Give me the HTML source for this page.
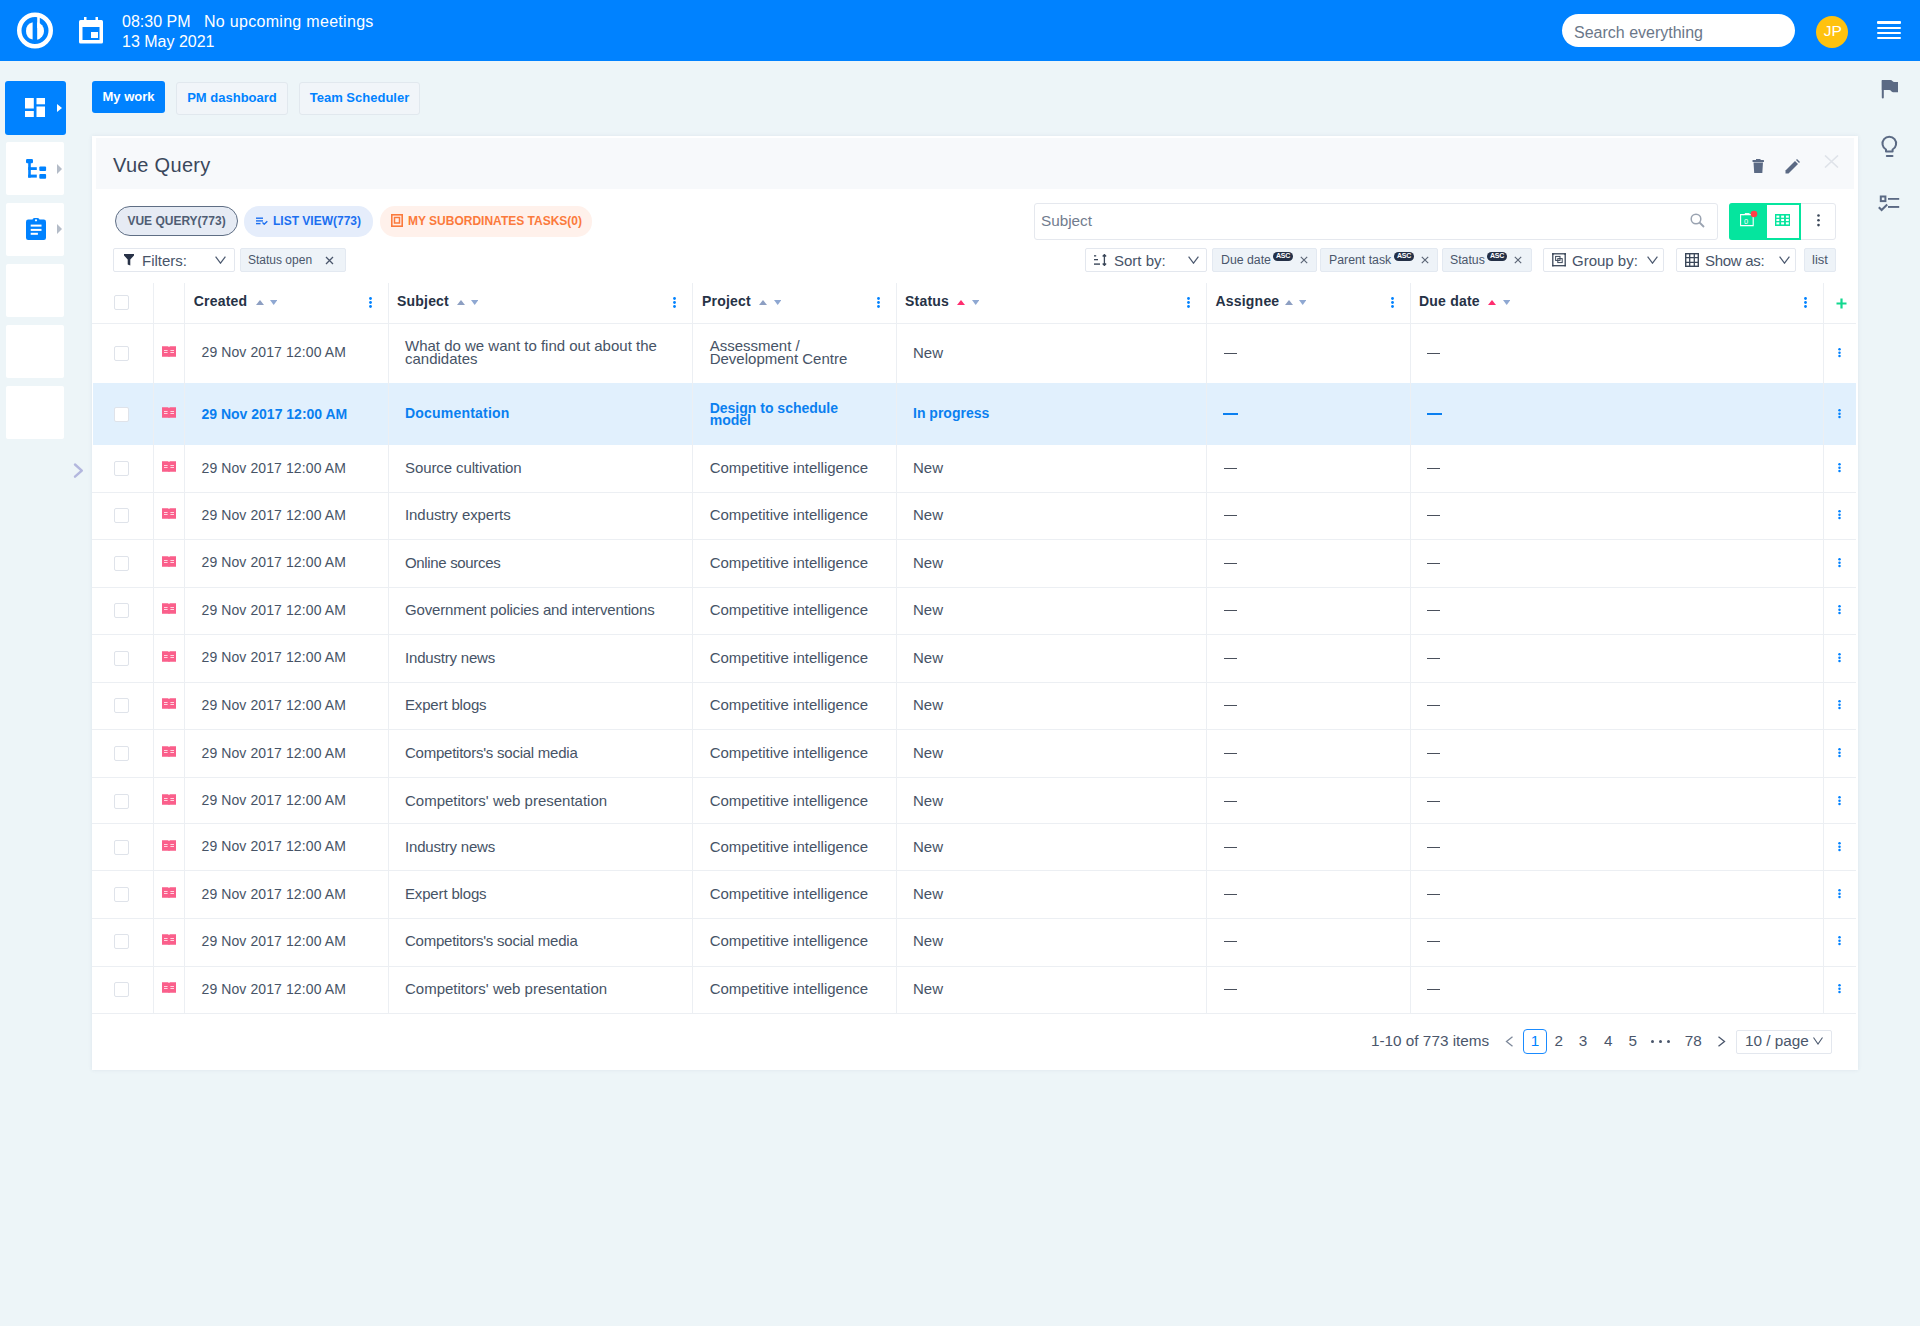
<!DOCTYPE html><html><head><meta charset="utf-8"><style>
*{box-sizing:border-box;margin:0;padding:0}
html,body{width:1920px;height:1326px;overflow:hidden}
body{background:#edf5f8;font-family:"Liberation Sans",sans-serif;color:#465366;position:relative}
.a{position:absolute}
.t{position:absolute;white-space:nowrap;line-height:1}
.hdr{left:0;top:0;width:1920px;height:61px;background:#0082ff}
.tile{position:absolute;left:6px;width:58px;height:53px;background:#fff;border-radius:2px}
.tab{position:absolute;top:82px;height:32.5px;border:1px solid #e1e8ee;border-radius:3px;background:#f1f5f9;color:#0082ff;font-weight:bold;font-size:13px;line-height:30px;text-align:center}
.card{left:92px;top:136px;width:1766px;height:934px;background:#fff;box-shadow:0 0 4px rgba(50,70,110,0.09)}
.chead{left:96px;top:138px;width:1758px;height:51px;background:#f7f9fb}
.pill{position:absolute;top:206px;height:30px;border-radius:15px;font-weight:bold;font-size:12px;line-height:30px;white-space:nowrap}
.box{position:absolute;height:24px;border:1px solid #e3e7ee;border-radius:2px;background:#fff}
.tag{position:absolute;height:24px;border:1px solid #e3e9f1;border-radius:2px;background:#eef3f8}
.vl{position:absolute;width:1px;background:#eceff3}
.hl{position:absolute;height:1px;background:#eceff3}
.cb{position:absolute;width:15px;height:15px;border:1px solid #dfe3ea;border-radius:2px;background:#fff}
.keb{position:absolute;width:3px}
.keb i{display:block;width:3px;height:3px;border-radius:50%;background:#0082ff;margin-bottom:1.2px}
.cell{position:absolute;font-size:15px;color:#465366;white-space:nowrap}
.hc{position:absolute;font-size:14px;font-weight:bold;color:#263246;white-space:nowrap;line-height:1;letter-spacing:0.2px}
.sa{position:absolute;width:0;height:0;border-left:4px solid transparent;border-right:4px solid transparent}
</style></head><body>
<div class="a hdr"></div>
<svg class="a" style="left:16px;top:12px" width="38" height="38" viewBox="0 0 38 38">
<circle cx="19" cy="18.5" r="15.75" fill="none" stroke="#fff" stroke-width="4.5"/>
<path d="M16.6 10.23 A9 9 0 0 0 16.6 27.57 Z" fill="#fff"/>
<path d="M21.2 10.17 A9 9 0 0 1 21.2 27.63 Z" fill="#fff"/>
<rect x="21.2" y="4" width="2.6" height="12" fill="#fff"/>
</svg>
<svg class="a" style="left:79px;top:17px" width="24" height="27" viewBox="0 0 24 27">
<rect x="0" y="3" width="24" height="23.5" rx="1.5" fill="#fff"/>
<rect x="3.5" y="10" width="17" height="13" fill="#0082ff"/>
<rect x="12" y="15" width="7" height="6" fill="#fff"/>
<rect x="5" y="0" width="2.5" height="5" fill="#fff"/>
<rect x="16.5" y="0" width="2.5" height="5" fill="#fff"/>
</svg>
<div class="t" style="left:122px;top:14px;font-size:16px;color:#fff">08:30 PM</div>
<div class="t" style="left:204px;top:14px;font-size:16px;color:#fff;letter-spacing:0.3px">No upcoming meetings</div>
<div class="t" style="left:122px;top:34px;font-size:16px;color:#fff">13 May 2021</div>
<div class="a" style="left:1562px;top:14px;width:233px;height:33px;border-radius:17px;background:#fff"></div>
<div class="t" style="left:1574px;top:25px;font-size:16px;color:#6b7789">Search everything</div>
<div class="a" style="left:1816px;top:16px;width:32px;height:32px;border-radius:50%;background:#ffc20e"></div>
<div class="t" style="left:1823.8px;top:23px;font-size:15.5px;color:#fff;letter-spacing:0px">JP</div>
<div class="a" style="left:1877px;top:21.2px;width:24px;height:2.6px;border-radius:1px;background:#fff"></div>
<div class="a" style="left:1877px;top:26.6px;width:24px;height:2.6px;border-radius:1px;background:#fff"></div>
<div class="a" style="left:1877px;top:31.7px;width:24px;height:2.6px;border-radius:1px;background:#fff"></div>
<div class="a" style="left:1877px;top:36.8px;width:24px;height:2.6px;border-radius:1px;background:#fff"></div>
<div class="a" style="left:5px;top:81px;width:61px;height:54px;background:#0082ff;border-radius:3px"></div>
<svg class="a" style="left:25.2px;top:98.2px" width="20" height="19" viewBox="0 0 20 19">
<rect x="0" y="0" width="8.8" height="10.5" fill="#fff"/><rect x="0" y="13" width="8.8" height="6" fill="#fff"/>
<rect x="11.5" y="0" width="8.5" height="6.3" fill="#fff"/><rect x="11.5" y="8.5" width="8.5" height="10.5" fill="#fff"/>
</svg>
<div class="sa" style="left:57px;top:104px;border:0;border-top:4.5px solid transparent;border-bottom:4.5px solid transparent;border-left:5px solid #fff"></div>
<div class="tile" style="top:142px"></div>
<div class="tile" style="top:203px"></div>
<div class="tile" style="top:264px"></div>
<div class="tile" style="top:325px"></div>
<div class="tile" style="top:386px"></div>
<svg class="a" style="left:26px;top:159px" width="21" height="20" viewBox="0 0 21 20">
<rect x="0" y="0" width="7" height="4.2" rx="1.2" fill="#0082ff"/>
<rect x="2.2" y="3" width="2.6" height="15.6" fill="#0082ff"/>
<rect x="2.2" y="8.2" width="8.6" height="2.8" fill="#0082ff"/>
<rect x="2.2" y="15.6" width="8.6" height="3" fill="#0082ff"/>
<rect x="13.3" y="7.4" width="6.8" height="4.7" rx="1" fill="#0082ff"/>
<rect x="13.3" y="15" width="6.8" height="4.7" rx="1" fill="#0082ff"/>
</svg>
<div class="sa" style="left:57px;top:164px;border:0;border-top:5px solid transparent;border-bottom:5px solid transparent;border-left:5px solid #b4bcc8"></div>
<svg class="a" style="left:26px;top:218px" width="20" height="22" viewBox="0 0 20 22">
<rect x="0" y="1.5" width="20" height="20.5" rx="2.2" fill="#0082ff"/>
<rect x="6.5" y="0" width="7" height="4" rx="2" fill="#0082ff"/>
<circle cx="10" cy="2.3" r="1.1" fill="#fff"/>
<rect x="4.7" y="6.6" width="10.8" height="2" fill="#fff"/>
<rect x="4.7" y="10.9" width="10.8" height="2" fill="#fff"/>
<rect x="4.7" y="14.8" width="7.2" height="2" fill="#fff"/>
</svg>
<div class="sa" style="left:57px;top:224px;border:0;border-top:5px solid transparent;border-bottom:5px solid transparent;border-left:5px solid #b4bcc8"></div>
<svg class="a" style="left:73px;top:462px" width="11" height="17" viewBox="0 0 11 17"><path d="M2 2.5 L8.8 8.6 L2 14.7" fill="none" stroke="#b3b7de" stroke-width="2.4" stroke-linecap="round" stroke-linejoin="round"/></svg>
<div class="a" style="left:92px;top:81px;width:73px;height:32px;background:#0082ff;border-radius:3px;color:#fff;font-weight:bold;font-size:13px;line-height:32px;text-align:center">My work</div>
<div class="tab" style="left:176px;width:112px">PM dashboard</div>
<div class="tab" style="left:299px;width:121px">Team Scheduler</div>
<svg class="a" style="left:1881px;top:80px" width="18" height="19" viewBox="0 0 18 19">
<rect x="0.8" y="0" width="2" height="18.5" rx="1" fill="#5b6a84"/>
<path d="M0.8 0 L9.3 0 Q10.8 0 11.4 1 Q12 2 13.5 2 L17 2 L17 12.2 L12 12.2 Q10.6 12.2 10.1 11.1 Q9.6 10 8.2 10 L0.8 10 Z" fill="#5b6a84"/>
</svg>
<svg class="a" style="left:1880px;top:135px" width="19" height="23" viewBox="0 0 19 23">
<path d="M6 16.4 L6 14.5 A6.8 6.8 0 1 1 12.6 14.5 L12.6 16.4 Z" fill="none" stroke="#5b6a84" stroke-width="2" stroke-linejoin="round"/>
<rect x="5.8" y="20" width="7.7" height="2" rx="1" fill="#5b6a84"/>
</svg>
<svg class="a" style="left:1878px;top:194px" width="22" height="18" viewBox="0 0 22 18">
<rect x="2.8" y="2.5" width="4.6" height="4.6" fill="none" stroke="#5b6a84" stroke-width="2"/>
<rect x="10" y="4" width="11.2" height="1.8" fill="#5b6a84"/>
<rect x="10" y="12" width="11.2" height="1.9" fill="#5b6a84"/>
<path d="M0.8 13.2 L3.6 16 L9.2 10.5" fill="none" stroke="#5b6a84" stroke-width="2"/>
</svg>
<div class="a card"></div>
<div class="a chead"></div>
<div class="t" style="left:113px;top:155px;font-size:20px;color:#3a475b;letter-spacing:0.3px">Vue Query</div>
<svg class="a" style="left:1752px;top:159px" width="13" height="14" viewBox="0 0 13 14">
<rect x="0.5" y="1" width="11.5" height="2" rx="0.5" fill="#5b6a84"/><rect x="4" y="0" width="4.5" height="1.5" fill="#5b6a84"/>
<path d="M1.5 3.5 L11 3.5 L10.3 14 L2.2 14 Z" fill="#5b6a84"/>
</svg>
<svg class="a" style="left:1785px;top:159px" width="15" height="15" viewBox="0 0 15 15">
<path d="M0.5 11.5 L10 2 L13 5 L3.5 14.5 L0.5 14.5 Z" fill="#5b6a84"/><path d="M11 1 L12 0 L15 3 L14 4 Z" fill="#5b6a84"/>
</svg>
<svg class="a" style="left:1824px;top:155px" width="15" height="13" viewBox="0 0 15 13"><path d="M1 0.5 L14 12.5 M14 0.5 L1 12.5" stroke="#dfe3e9" stroke-width="1.6"/></svg>
<div class="pill" style="left:115px;width:123px;border:1px solid #5f6e84;background:#e6ebf4;color:#4f5d73;text-align:center;line-height:28px">VUE QUERY(773)</div>
<div class="pill" style="left:244px;top:205.5px;height:31px;line-height:31px;width:129px;background:#e5edfb;color:#1c6ff0"><span style="position:absolute;left:29px">LIST VIEW(773)</span></div>
<svg class="a" style="left:256px;top:216.5px" width="12" height="8" viewBox="0 0 12 8"><rect x="0" y="0.5" width="7" height="1.4" fill="#1c6ff0"/><rect x="0" y="3.2" width="7" height="1.4" fill="#1c6ff0"/><rect x="0" y="5.9" width="4.5" height="1.4" fill="#1c6ff0"/><path d="M6.5 5.6 L8.2 7.2 L11.3 4.2" fill="none" stroke="#1c6ff0" stroke-width="1.4"/></svg>
<div class="pill" style="left:380px;top:205.5px;height:31px;line-height:31px;width:212px;background:#fff1eb;color:#fb7a3c"><span style="position:absolute;left:28px">MY SUBORDINATES TASKS(0)</span></div>
<svg class="a" style="left:391px;top:214px" width="12" height="13" viewBox="0 0 12 13"><rect x="0.8" y="0.8" width="10.4" height="11.4" fill="none" stroke="#fb7a3c" stroke-width="1.6"/><rect x="3.5" y="3.5" width="5" height="5.5" fill="none" stroke="#fb7a3c" stroke-width="1.5"/></svg>
<div class="box" style="left:113px;top:248px;width:122px"></div>
<svg class="a" style="left:124px;top:254px" width="10" height="11.5" viewBox="0 0 10 11.5"><path d="M0 0 L10 0 L10 1.4 L6.3 5.6 L6.3 11.5 L3.7 10.5 L3.7 5.6 L0 1.4 Z" fill="#283247"/></svg>
<div class="t" style="left:142px;top:253px;font-size:15px;color:#475469">Filters:</div>
<svg class="a" style="left:215px;top:255.5px" width="11" height="8" viewBox="0 0 11 8"><path d="M0.6 0.6 L5.5 7.2 L10.4 0.6" fill="none" stroke="#4d5a70" stroke-width="1.2"/></svg>
<div class="tag" style="left:240px;top:248px;width:106px"></div>
<div class="t" style="left:248px;top:254px;font-size:12px;color:#4a566b">Status open</div>
<svg class="a" style="left:325px;top:256px" width="9" height="9" viewBox="0 0 9 9"><path d="M1 1 L8 8 M8 1 L1 8" stroke="#4a566b" stroke-width="1.3"/></svg>
<div class="a" style="left:1034px;top:203px;width:684px;height:37px;border:1px solid #e5e8ee;border-radius:3px;background:#fff"></div>
<div class="t" style="left:1041px;top:213px;font-size:15.3px;color:#717c8e">Subject</div>
<svg class="a" style="left:1690px;top:213px" width="15" height="15" viewBox="0 0 15 15"><circle cx="6" cy="6" r="4.8" fill="none" stroke="#9aa3b1" stroke-width="1.5"/><path d="M9.5 9.5 L14 14" stroke="#9aa3b1" stroke-width="1.8"/></svg>
<div class="a" style="left:1729px;top:203px;width:107px;height:37px;border:1px solid #e5e8ee;border-radius:3px;background:#fff"></div>
<div class="a" style="left:1729px;top:203px;width:37px;height:37px;border-radius:3px 0 0 3px;background:#05e59e"></div>
<div class="a" style="left:1765px;top:203px;width:36px;height:37px;border:2px solid #05e59e;background:#fff"></div>
<svg class="a" style="left:1739px;top:210px" width="20" height="17" viewBox="0 0 20 17"><path d="M1.6 4.6 L1.6 15.6 L14.2 15.6 L14.2 4.6 Z" fill="none" stroke="#fff" stroke-width="1.1"/><path d="M4.5 5.2 L6 3.6 L10.5 3.6" fill="none" stroke="#fff" stroke-width="1"/><text x="5.1" y="13.6" font-size="7.5" font-family="Liberation Sans" fill="#fff">0</text><circle cx="15" cy="4" r="3.3" fill="#ff4048"/></svg>
<svg class="a" style="left:1775px;top:214px" width="15" height="12" viewBox="0 0 15 12"><rect x="0" y="0" width="15" height="12" fill="#05e59e"/><rect x="1.40" y="1.60" width="2.9" height="2.1" fill="#fff"/><rect x="1.40" y="4.95" width="2.9" height="2.1" fill="#fff"/><rect x="1.40" y="8.30" width="2.9" height="2.1" fill="#fff"/><rect x="6.15" y="1.60" width="2.9" height="2.1" fill="#fff"/><rect x="6.15" y="4.95" width="2.9" height="2.1" fill="#fff"/><rect x="6.15" y="8.30" width="2.9" height="2.1" fill="#fff"/><rect x="10.90" y="1.60" width="2.9" height="2.1" fill="#fff"/><rect x="10.90" y="4.95" width="2.9" height="2.1" fill="#fff"/><rect x="10.90" y="8.30" width="2.9" height="2.1" fill="#fff"/></svg>
<svg class="a" style="left:1816.5px;top:213.5px" width="3" height="13" viewBox="0 0 3 13"><circle cx="1.5" cy="1.5" r="1.3" fill="#3b4759"/><circle cx="1.5" cy="6.3" r="1.3" fill="#3b4759"/><circle cx="1.5" cy="11.1" r="1.3" fill="#3b4759"/></svg>
<div class="box" style="left:1085px;top:248px;width:122px"></div>
<svg class="a" style="left:1094px;top:254px" width="13" height="12" viewBox="0 0 13 12"><rect x="0" y="1.2" width="2.2" height="1.3" fill="#3b4759"/><rect x="0" y="5" width="4" height="1.3" fill="#3b4759"/><rect x="0" y="9.4" width="6" height="1.4" fill="#3b4759"/><path d="M10.4 0.8 V11.2 M8.7 2.5 L10.4 0.6 L12.1 2.5 M8.7 9.5 L10.4 11.4 L12.1 9.5" fill="none" stroke="#3b4759" stroke-width="1.3"/></svg>
<div class="t" style="left:1114px;top:253px;font-size:15px;color:#475469">Sort by:</div>
<svg class="a" style="left:1187.5px;top:255.5px" width="11" height="8" viewBox="0 0 11 8"><path d="M0.6 0.6 L5.5 7.2 L10.4 0.6" fill="none" stroke="#4d5a70" stroke-width="1.2"/></svg>
<div class="tag" style="left:1212px;top:248px;width:105px"></div>
<div class="t" style="left:1221px;top:254px;font-size:12.3px;color:#4a566b">Due date</div>
<div class="a" style="left:1273px;top:252px;width:20px;height:8.5px;border-radius:4.5px;background:#243047;color:#fff;font-size:7px;font-weight:bold;line-height:8.5px;text-align:center;letter-spacing:-0.3px">ASC</div>
<svg class="a" style="left:1300px;top:256px" width="8" height="8" viewBox="0 0 8 8"><path d="M0.8 0.8 L7.2 7.2 M7.2 0.8 L0.8 7.2" stroke="#5a6475" stroke-width="1.15"/></svg>
<div class="tag" style="left:1320px;top:248px;width:118px"></div>
<div class="t" style="left:1329px;top:254px;font-size:12.3px;color:#4a566b">Parent task</div>
<div class="a" style="left:1394px;top:252px;width:20px;height:8.5px;border-radius:4.5px;background:#243047;color:#fff;font-size:7px;font-weight:bold;line-height:8.5px;text-align:center;letter-spacing:-0.3px">ASC</div>
<svg class="a" style="left:1421px;top:256px" width="8" height="8" viewBox="0 0 8 8"><path d="M0.8 0.8 L7.2 7.2 M7.2 0.8 L0.8 7.2" stroke="#5a6475" stroke-width="1.15"/></svg>
<div class="tag" style="left:1442px;top:248px;width:90px"></div>
<div class="t" style="left:1450px;top:254px;font-size:12.3px;color:#4a566b">Status</div>
<div class="a" style="left:1487px;top:252px;width:20px;height:8.5px;border-radius:4.5px;background:#243047;color:#fff;font-size:7px;font-weight:bold;line-height:8.5px;text-align:center;letter-spacing:-0.3px">ASC</div>
<svg class="a" style="left:1514px;top:256px" width="8" height="8" viewBox="0 0 8 8"><path d="M0.8 0.8 L7.2 7.2 M7.2 0.8 L0.8 7.2" stroke="#5a6475" stroke-width="1.15"/></svg>
<div class="box" style="left:1543px;top:248px;width:121px"></div>
<svg class="a" style="left:1552px;top:253px" width="14" height="13.5" viewBox="0 0 14 13.5"><rect x="0.8" y="0.8" width="12.4" height="11.9" fill="none" stroke="#3b4759" stroke-width="1.3"/><circle cx="0.9" cy="0.9" r="0.9" fill="#3b4759"/><circle cx="13.1" cy="0.9" r="0.9" fill="#3b4759"/><circle cx="0.9" cy="12.6" r="0.9" fill="#3b4759"/><circle cx="13.1" cy="12.6" r="0.9" fill="#3b4759"/><rect x="3.6" y="3.4" width="4.4" height="4" fill="none" stroke="#3b4759" stroke-width="1"/><rect x="5.8" y="5.6" width="4.4" height="4" fill="none" stroke="#3b4759" stroke-width="1"/></svg>
<div class="t" style="left:1572px;top:253px;font-size:15px;color:#475469">Group by:</div>
<svg class="a" style="left:1646.5px;top:255.5px" width="11" height="8" viewBox="0 0 11 8"><path d="M0.6 0.6 L5.5 7.2 L10.4 0.6" fill="none" stroke="#4d5a70" stroke-width="1.2"/></svg>
<div class="box" style="left:1676px;top:248px;width:120px"></div>
<svg class="a" style="left:1685px;top:253px" width="14" height="14" viewBox="0 0 14 14"><rect x="0.7" y="0.7" width="12.6" height="12.6" fill="none" stroke="#3b4759" stroke-width="1.4"/><path d="M0 4.7 H14 M0 9.3 H14 M4.7 0 V14 M9.3 0 V14" stroke="#3b4759" stroke-width="1.3"/></svg>
<div class="t" style="left:1705px;top:253px;font-size:15px;color:#475469;letter-spacing:-0.3px">Show as:</div>
<svg class="a" style="left:1779px;top:255.5px" width="11" height="8" viewBox="0 0 11 8"><path d="M0.6 0.6 L5.5 7.2 L10.4 0.6" fill="none" stroke="#4d5a70" stroke-width="1.2"/></svg>
<div class="tag" style="left:1804px;top:248px;width:32px"></div>
<div class="t" style="left:1812px;top:253px;font-size:13px;color:#4a566b">list</div>
<div class="hl" style="left:92px;top:322.5px;width:1764px"></div>
<div class="a" style="left:93px;top:383.3px;width:1763px;height:61.69999999999999px;background:#e1f0fd"></div>
<div class="vl" style="left:153.0px;top:283px;height:730.1px"></div>
<div class="vl" style="left:183.8px;top:283px;height:730.1px"></div>
<div class="vl" style="left:388.3px;top:283px;height:730.1px"></div>
<div class="vl" style="left:692.3px;top:283px;height:730.1px"></div>
<div class="vl" style="left:895.8px;top:283px;height:730.1px"></div>
<div class="vl" style="left:1205.8px;top:283px;height:730.1px"></div>
<div class="vl" style="left:1409.7px;top:283px;height:730.1px"></div>
<div class="vl" style="left:1822.5px;top:283px;height:730.1px"></div>
<div class="hl" style="left:92px;top:491.85px;width:1764px"></div>
<div class="hl" style="left:92px;top:539.1px;width:1764px"></div>
<div class="hl" style="left:92px;top:586.7px;width:1764px"></div>
<div class="hl" style="left:92px;top:634.2px;width:1764px"></div>
<div class="hl" style="left:92px;top:681.8px;width:1764px"></div>
<div class="hl" style="left:92px;top:729.4px;width:1764px"></div>
<div class="hl" style="left:92px;top:777.0px;width:1764px"></div>
<div class="hl" style="left:92px;top:823.1px;width:1764px"></div>
<div class="hl" style="left:92px;top:870.4px;width:1764px"></div>
<div class="hl" style="left:92px;top:917.8px;width:1764px"></div>
<div class="hl" style="left:92px;top:965.5px;width:1764px"></div>
<div class="hl" style="left:92px;top:1012.6px;width:1764px"></div>
<div class="cb" style="left:114px;top:295px"></div>
<div class="hc" style="left:193.8px;top:294px">Created</div>
<div class="hc" style="left:397px;top:294px">Subject</div>
<div class="hc" style="left:702px;top:294px">Project</div>
<div class="hc" style="left:905px;top:294px">Status</div>
<div class="hc" style="left:1215.5px;top:294px">Assignee</div>
<div class="hc" style="left:1419px;top:294px">Due date</div>
<svg class="a" style="left:255.5px;top:300px" width="8" height="5" viewBox="0 0 8 5"><path d="M0 5 L4 0 L8 5 Z" fill="#8d9fc2"/></svg>
<svg class="a" style="left:269.5px;top:300px" width="7.4" height="5" viewBox="0 0 7.4 5"><path d="M0 0 L3.7 5 L7.4 0 Z" fill="#8fa8d2"/></svg>
<svg class="a" style="left:457px;top:300px" width="8" height="5" viewBox="0 0 8 5"><path d="M0 5 L4 0 L8 5 Z" fill="#8d9fc2"/></svg>
<svg class="a" style="left:470.8px;top:300px" width="7.4" height="5" viewBox="0 0 7.4 5"><path d="M0 0 L3.7 5 L7.4 0 Z" fill="#8fa8d2"/></svg>
<svg class="a" style="left:759.2px;top:300px" width="8" height="5" viewBox="0 0 8 5"><path d="M0 5 L4 0 L8 5 Z" fill="#8d9fc2"/></svg>
<svg class="a" style="left:773.5999999999999px;top:300px" width="7.4" height="5" viewBox="0 0 7.4 5"><path d="M0 0 L3.7 5 L7.4 0 Z" fill="#8fa8d2"/></svg>
<svg class="a" style="left:956.8px;top:300px" width="8" height="5" viewBox="0 0 8 5"><path d="M0 5 L4 0 L8 5 Z" fill="#ff2d6f"/></svg>
<svg class="a" style="left:971.8px;top:300px" width="7.4" height="5" viewBox="0 0 7.4 5"><path d="M0 0 L3.7 5 L7.4 0 Z" fill="#8fa8d2"/></svg>
<svg class="a" style="left:1284.7px;top:300px" width="8" height="5" viewBox="0 0 8 5"><path d="M0 5 L4 0 L8 5 Z" fill="#8d9fc2"/></svg>
<svg class="a" style="left:1299.1px;top:300px" width="7.4" height="5" viewBox="0 0 7.4 5"><path d="M0 0 L3.7 5 L7.4 0 Z" fill="#8fa8d2"/></svg>
<svg class="a" style="left:1488px;top:300px" width="8" height="5" viewBox="0 0 8 5"><path d="M0 5 L4 0 L8 5 Z" fill="#ff2d6f"/></svg>
<svg class="a" style="left:1502.8px;top:300px" width="7.4" height="5" viewBox="0 0 7.4 5"><path d="M0 0 L3.7 5 L7.4 0 Z" fill="#8fa8d2"/></svg>
<svg class="a" style="left:369.0px;top:297px" width="3" height="11" viewBox="0 0 3 11"><circle cx="1.5" cy="1.5" r="1.4" fill="#0082ff"/><circle cx="1.5" cy="5.5" r="1.4" fill="#0082ff"/><circle cx="1.5" cy="9.5" r="1.4" fill="#0082ff"/></svg>
<svg class="a" style="left:673.1px;top:297px" width="3" height="11" viewBox="0 0 3 11"><circle cx="1.5" cy="1.5" r="1.4" fill="#0082ff"/><circle cx="1.5" cy="5.5" r="1.4" fill="#0082ff"/><circle cx="1.5" cy="9.5" r="1.4" fill="#0082ff"/></svg>
<svg class="a" style="left:876.8px;top:297px" width="3" height="11" viewBox="0 0 3 11"><circle cx="1.5" cy="1.5" r="1.4" fill="#0082ff"/><circle cx="1.5" cy="5.5" r="1.4" fill="#0082ff"/><circle cx="1.5" cy="9.5" r="1.4" fill="#0082ff"/></svg>
<svg class="a" style="left:1187.0px;top:297px" width="3" height="11" viewBox="0 0 3 11"><circle cx="1.5" cy="1.5" r="1.4" fill="#0082ff"/><circle cx="1.5" cy="5.5" r="1.4" fill="#0082ff"/><circle cx="1.5" cy="9.5" r="1.4" fill="#0082ff"/></svg>
<svg class="a" style="left:1390.7px;top:297px" width="3" height="11" viewBox="0 0 3 11"><circle cx="1.5" cy="1.5" r="1.4" fill="#0082ff"/><circle cx="1.5" cy="5.5" r="1.4" fill="#0082ff"/><circle cx="1.5" cy="9.5" r="1.4" fill="#0082ff"/></svg>
<svg class="a" style="left:1803.7px;top:297px" width="3" height="11" viewBox="0 0 3 11"><circle cx="1.5" cy="1.5" r="1.4" fill="#0082ff"/><circle cx="1.5" cy="5.5" r="1.4" fill="#0082ff"/><circle cx="1.5" cy="9.5" r="1.4" fill="#0082ff"/></svg>
<svg class="a" style="left:1836px;top:297.5px" width="11" height="11" viewBox="0 0 11 11"><path d="M5.5 0.5 V10.5 M0.5 5.5 H10.5" stroke="#12d88f" stroke-width="2.2"/></svg>
<div class="cb" style="left:114px;top:345.65px"></div>
<svg class="a" style="left:162px;top:346px" width="14" height="11" viewBox="0 0 14 11"><path d="M0 0.3 L6 0.3 L7 1 L8 0.3 L14 0.3 L14 10.7 L8 10.7 L7 11 L6 10.7 L0 10.7 Z" fill="#fa5f8b"/><path d="M2 4.5 H5.6 M2 6.5 H5.6 M8.4 4.5 H12 M8.4 6.5 H12" stroke="#ffd6e2" stroke-width="1"/></svg>
<div class="t" style="left:201.5px;top:345.24999999999994px;font-size:14px;font-weight:normal;color:#465366;letter-spacing:0.1px">29 Nov 2017 12:00 AM</div>
<div class="t" style="left:405px;top:340.04999999999995px;font-size:15px;font-weight:normal;color:#465366;line-height:12.6px;white-space:normal">What do we want to find out about the<br>candidates</div>
<div class="t" style="left:709.7px;top:340.04999999999995px;font-size:15px;font-weight:normal;color:#465366;line-height:12.6px">Assessment /<br>Development Centre</div>
<div class="t" style="left:913px;top:344.74999999999994px;font-size:15px;font-weight:normal;color:#465366">New</div>
<div class="a" style="left:1224px;top:353px;width:12.5px;height:1px;background:#4a505c"></div>
<div class="a" style="left:1427px;top:353px;width:12.5px;height:1px;background:#4a505c"></div>
<svg class="a" style="left:1837.8px;top:347.65px" width="3" height="10" viewBox="0 0 3 10"><circle cx="1.5" cy="1.3" r="1.25" fill="#0082ff"/><circle cx="1.5" cy="4.7" r="1.25" fill="#0082ff"/><circle cx="1.5" cy="8.1" r="1.25" fill="#0082ff"/></svg>
<div class="cb" style="left:114px;top:406.65px"></div>
<svg class="a" style="left:162px;top:407px" width="14" height="11" viewBox="0 0 14 11"><path d="M0 0.3 L6 0.3 L7 1 L8 0.3 L14 0.3 L14 10.7 L8 10.7 L7 11 L6 10.7 L0 10.7 Z" fill="#fa5f8b"/><path d="M2 4.5 H5.6 M2 6.5 H5.6 M8.4 4.5 H12 M8.4 6.5 H12" stroke="#ffd6e2" stroke-width="1"/></svg>
<div class="t" style="left:201.5px;top:406.95px;font-size:14px;font-weight:bold;color:#0a7ff0;letter-spacing:0px">29 Nov 2017 12:00 AM</div>
<div class="t" style="left:405px;top:406.45px;font-size:14px;font-weight:bold;color:#0a7ff0;letter-spacing:0.2px">Documentation</div>
<div class="t" style="left:709.7px;top:401.75px;font-size:14px;font-weight:bold;color:#0a7ff0;line-height:12.6px">Design to schedule<br>model</div>
<div class="t" style="left:913px;top:406.45px;font-size:14px;font-weight:bold;color:#0a7ff0">In progress</div>
<div class="a" style="left:1223px;top:413.15px;width:15px;height:2px;background:#0a7ff0"></div>
<div class="a" style="left:1427px;top:413.15px;width:15px;height:2px;background:#0a7ff0"></div>
<svg class="a" style="left:1837.8px;top:408.65px" width="3" height="10" viewBox="0 0 3 10"><circle cx="1.5" cy="1.3" r="1.25" fill="#0082ff"/><circle cx="1.5" cy="4.7" r="1.25" fill="#0082ff"/><circle cx="1.5" cy="8.1" r="1.25" fill="#0082ff"/></svg>
<div class="cb" style="left:114px;top:461.0px"></div>
<svg class="a" style="left:162px;top:461px" width="14" height="11" viewBox="0 0 14 11"><path d="M0 0.3 L6 0.3 L7 1 L8 0.3 L14 0.3 L14 10.7 L8 10.7 L7 11 L6 10.7 L0 10.7 Z" fill="#fa5f8b"/><path d="M2 4.5 H5.6 M2 6.5 H5.6 M8.4 4.5 H12 M8.4 6.5 H12" stroke="#ffd6e2" stroke-width="1"/></svg>
<div class="t" style="left:201.5px;top:460.59999999999997px;font-size:14px;font-weight:normal;color:#465366;letter-spacing:0.1px">29 Nov 2017 12:00 AM</div>
<div class="t" style="left:405px;top:460.09999999999997px;font-size:15px;font-weight:normal;color:#465366;letter-spacing:-0.1px">Source cultivation</div>
<div class="t" style="left:709.7px;top:460.09999999999997px;font-size:15px;font-weight:normal;color:#465366">Competitive intelligence</div>
<div class="t" style="left:913px;top:460.09999999999997px;font-size:15px;font-weight:normal;color:#465366">New</div>
<div class="a" style="left:1224px;top:468px;width:12.5px;height:1px;background:#4a505c"></div>
<div class="a" style="left:1427px;top:468px;width:12.5px;height:1px;background:#4a505c"></div>
<svg class="a" style="left:1837.8px;top:463.0px" width="3" height="10" viewBox="0 0 3 10"><circle cx="1.5" cy="1.3" r="1.25" fill="#0082ff"/><circle cx="1.5" cy="4.7" r="1.25" fill="#0082ff"/><circle cx="1.5" cy="8.1" r="1.25" fill="#0082ff"/></svg>
<div class="cb" style="left:114px;top:508.35px"></div>
<svg class="a" style="left:162px;top:508px" width="14" height="11" viewBox="0 0 14 11"><path d="M0 0.3 L6 0.3 L7 1 L8 0.3 L14 0.3 L14 10.7 L8 10.7 L7 11 L6 10.7 L0 10.7 Z" fill="#fa5f8b"/><path d="M2 4.5 H5.6 M2 6.5 H5.6 M8.4 4.5 H12 M8.4 6.5 H12" stroke="#ffd6e2" stroke-width="1"/></svg>
<div class="t" style="left:201.5px;top:507.95px;font-size:14px;font-weight:normal;color:#465366;letter-spacing:0.1px">29 Nov 2017 12:00 AM</div>
<div class="t" style="left:405px;top:507.45px;font-size:15px;font-weight:normal;color:#465366;letter-spacing:-0.07px">Industry experts</div>
<div class="t" style="left:709.7px;top:507.45px;font-size:15px;font-weight:normal;color:#465366">Competitive intelligence</div>
<div class="t" style="left:913px;top:507.45px;font-size:15px;font-weight:normal;color:#465366">New</div>
<div class="a" style="left:1224px;top:515px;width:12.5px;height:1px;background:#4a505c"></div>
<div class="a" style="left:1427px;top:515px;width:12.5px;height:1px;background:#4a505c"></div>
<svg class="a" style="left:1837.8px;top:510.35px" width="3" height="10" viewBox="0 0 3 10"><circle cx="1.5" cy="1.3" r="1.25" fill="#0082ff"/><circle cx="1.5" cy="4.7" r="1.25" fill="#0082ff"/><circle cx="1.5" cy="8.1" r="1.25" fill="#0082ff"/></svg>
<div class="cb" style="left:114px;top:555.6px"></div>
<svg class="a" style="left:162px;top:556px" width="14" height="11" viewBox="0 0 14 11"><path d="M0 0.3 L6 0.3 L7 1 L8 0.3 L14 0.3 L14 10.7 L8 10.7 L7 11 L6 10.7 L0 10.7 Z" fill="#fa5f8b"/><path d="M2 4.5 H5.6 M2 6.5 H5.6 M8.4 4.5 H12 M8.4 6.5 H12" stroke="#ffd6e2" stroke-width="1"/></svg>
<div class="t" style="left:201.5px;top:555.2px;font-size:14px;font-weight:normal;color:#465366;letter-spacing:0.1px">29 Nov 2017 12:00 AM</div>
<div class="t" style="left:405px;top:554.7px;font-size:15px;font-weight:normal;color:#465366;letter-spacing:-0.34px">Online sources</div>
<div class="t" style="left:709.7px;top:554.7px;font-size:15px;font-weight:normal;color:#465366">Competitive intelligence</div>
<div class="t" style="left:913px;top:554.7px;font-size:15px;font-weight:normal;color:#465366">New</div>
<div class="a" style="left:1224px;top:563px;width:12.5px;height:1px;background:#4a505c"></div>
<div class="a" style="left:1427px;top:563px;width:12.5px;height:1px;background:#4a505c"></div>
<svg class="a" style="left:1837.8px;top:557.6px" width="3" height="10" viewBox="0 0 3 10"><circle cx="1.5" cy="1.3" r="1.25" fill="#0082ff"/><circle cx="1.5" cy="4.7" r="1.25" fill="#0082ff"/><circle cx="1.5" cy="8.1" r="1.25" fill="#0082ff"/></svg>
<div class="cb" style="left:114px;top:603.2px"></div>
<svg class="a" style="left:162px;top:603px" width="14" height="11" viewBox="0 0 14 11"><path d="M0 0.3 L6 0.3 L7 1 L8 0.3 L14 0.3 L14 10.7 L8 10.7 L7 11 L6 10.7 L0 10.7 Z" fill="#fa5f8b"/><path d="M2 4.5 H5.6 M2 6.5 H5.6 M8.4 4.5 H12 M8.4 6.5 H12" stroke="#ffd6e2" stroke-width="1"/></svg>
<div class="t" style="left:201.5px;top:602.8000000000001px;font-size:14px;font-weight:normal;color:#465366;letter-spacing:0.1px">29 Nov 2017 12:00 AM</div>
<div class="t" style="left:405px;top:602.3000000000001px;font-size:15px;font-weight:normal;color:#465366;letter-spacing:-0.15px">Government policies and interventions</div>
<div class="t" style="left:709.7px;top:602.3000000000001px;font-size:15px;font-weight:normal;color:#465366">Competitive intelligence</div>
<div class="t" style="left:913px;top:602.3000000000001px;font-size:15px;font-weight:normal;color:#465366">New</div>
<div class="a" style="left:1224px;top:610px;width:12.5px;height:1px;background:#4a505c"></div>
<div class="a" style="left:1427px;top:610px;width:12.5px;height:1px;background:#4a505c"></div>
<svg class="a" style="left:1837.8px;top:605.2px" width="3" height="10" viewBox="0 0 3 10"><circle cx="1.5" cy="1.3" r="1.25" fill="#0082ff"/><circle cx="1.5" cy="4.7" r="1.25" fill="#0082ff"/><circle cx="1.5" cy="8.1" r="1.25" fill="#0082ff"/></svg>
<div class="cb" style="left:114px;top:650.7px"></div>
<svg class="a" style="left:162px;top:651px" width="14" height="11" viewBox="0 0 14 11"><path d="M0 0.3 L6 0.3 L7 1 L8 0.3 L14 0.3 L14 10.7 L8 10.7 L7 11 L6 10.7 L0 10.7 Z" fill="#fa5f8b"/><path d="M2 4.5 H5.6 M2 6.5 H5.6 M8.4 4.5 H12 M8.4 6.5 H12" stroke="#ffd6e2" stroke-width="1"/></svg>
<div class="t" style="left:201.5px;top:650.3000000000001px;font-size:14px;font-weight:normal;color:#465366;letter-spacing:0.1px">29 Nov 2017 12:00 AM</div>
<div class="t" style="left:405px;top:649.8000000000001px;font-size:15px;font-weight:normal;color:#465366;letter-spacing:-0.19px">Industry news</div>
<div class="t" style="left:709.7px;top:649.8000000000001px;font-size:15px;font-weight:normal;color:#465366">Competitive intelligence</div>
<div class="t" style="left:913px;top:649.8000000000001px;font-size:15px;font-weight:normal;color:#465366">New</div>
<div class="a" style="left:1224px;top:658px;width:12.5px;height:1px;background:#4a505c"></div>
<div class="a" style="left:1427px;top:658px;width:12.5px;height:1px;background:#4a505c"></div>
<svg class="a" style="left:1837.8px;top:652.7px" width="3" height="10" viewBox="0 0 3 10"><circle cx="1.5" cy="1.3" r="1.25" fill="#0082ff"/><circle cx="1.5" cy="4.7" r="1.25" fill="#0082ff"/><circle cx="1.5" cy="8.1" r="1.25" fill="#0082ff"/></svg>
<div class="cb" style="left:114px;top:698.3px"></div>
<svg class="a" style="left:162px;top:698px" width="14" height="11" viewBox="0 0 14 11"><path d="M0 0.3 L6 0.3 L7 1 L8 0.3 L14 0.3 L14 10.7 L8 10.7 L7 11 L6 10.7 L0 10.7 Z" fill="#fa5f8b"/><path d="M2 4.5 H5.6 M2 6.5 H5.6 M8.4 4.5 H12 M8.4 6.5 H12" stroke="#ffd6e2" stroke-width="1"/></svg>
<div class="t" style="left:201.5px;top:697.9px;font-size:14px;font-weight:normal;color:#465366;letter-spacing:0.1px">29 Nov 2017 12:00 AM</div>
<div class="t" style="left:405px;top:697.4px;font-size:15px;font-weight:normal;color:#465366;letter-spacing:-0.16px">Expert blogs</div>
<div class="t" style="left:709.7px;top:697.4px;font-size:15px;font-weight:normal;color:#465366">Competitive intelligence</div>
<div class="t" style="left:913px;top:697.4px;font-size:15px;font-weight:normal;color:#465366">New</div>
<div class="a" style="left:1224px;top:705px;width:12.5px;height:1px;background:#4a505c"></div>
<div class="a" style="left:1427px;top:705px;width:12.5px;height:1px;background:#4a505c"></div>
<svg class="a" style="left:1837.8px;top:700.3px" width="3" height="10" viewBox="0 0 3 10"><circle cx="1.5" cy="1.3" r="1.25" fill="#0082ff"/><circle cx="1.5" cy="4.7" r="1.25" fill="#0082ff"/><circle cx="1.5" cy="8.1" r="1.25" fill="#0082ff"/></svg>
<div class="cb" style="left:114px;top:745.9px"></div>
<svg class="a" style="left:162px;top:746px" width="14" height="11" viewBox="0 0 14 11"><path d="M0 0.3 L6 0.3 L7 1 L8 0.3 L14 0.3 L14 10.7 L8 10.7 L7 11 L6 10.7 L0 10.7 Z" fill="#fa5f8b"/><path d="M2 4.5 H5.6 M2 6.5 H5.6 M8.4 4.5 H12 M8.4 6.5 H12" stroke="#ffd6e2" stroke-width="1"/></svg>
<div class="t" style="left:201.5px;top:745.5px;font-size:14px;font-weight:normal;color:#465366;letter-spacing:0.1px">29 Nov 2017 12:00 AM</div>
<div class="t" style="left:405px;top:745.0px;font-size:15px;font-weight:normal;color:#465366;letter-spacing:-0.24px">Competitors's social media</div>
<div class="t" style="left:709.7px;top:745.0px;font-size:15px;font-weight:normal;color:#465366">Competitive intelligence</div>
<div class="t" style="left:913px;top:745.0px;font-size:15px;font-weight:normal;color:#465366">New</div>
<div class="a" style="left:1224px;top:753px;width:12.5px;height:1px;background:#4a505c"></div>
<div class="a" style="left:1427px;top:753px;width:12.5px;height:1px;background:#4a505c"></div>
<svg class="a" style="left:1837.8px;top:747.9px" width="3" height="10" viewBox="0 0 3 10"><circle cx="1.5" cy="1.3" r="1.25" fill="#0082ff"/><circle cx="1.5" cy="4.7" r="1.25" fill="#0082ff"/><circle cx="1.5" cy="8.1" r="1.25" fill="#0082ff"/></svg>
<div class="cb" style="left:114px;top:793.5px"></div>
<svg class="a" style="left:162px;top:794px" width="14" height="11" viewBox="0 0 14 11"><path d="M0 0.3 L6 0.3 L7 1 L8 0.3 L14 0.3 L14 10.7 L8 10.7 L7 11 L6 10.7 L0 10.7 Z" fill="#fa5f8b"/><path d="M2 4.5 H5.6 M2 6.5 H5.6 M8.4 4.5 H12 M8.4 6.5 H12" stroke="#ffd6e2" stroke-width="1"/></svg>
<div class="t" style="left:201.5px;top:793.1px;font-size:14px;font-weight:normal;color:#465366;letter-spacing:0.1px">29 Nov 2017 12:00 AM</div>
<div class="t" style="left:405px;top:792.6px;font-size:15px;font-weight:normal;color:#465366;letter-spacing:0px">Competitors' web presentation</div>
<div class="t" style="left:709.7px;top:792.6px;font-size:15px;font-weight:normal;color:#465366">Competitive intelligence</div>
<div class="t" style="left:913px;top:792.6px;font-size:15px;font-weight:normal;color:#465366">New</div>
<div class="a" style="left:1224px;top:801px;width:12.5px;height:1px;background:#4a505c"></div>
<div class="a" style="left:1427px;top:801px;width:12.5px;height:1px;background:#4a505c"></div>
<svg class="a" style="left:1837.8px;top:795.5px" width="3" height="10" viewBox="0 0 3 10"><circle cx="1.5" cy="1.3" r="1.25" fill="#0082ff"/><circle cx="1.5" cy="4.7" r="1.25" fill="#0082ff"/><circle cx="1.5" cy="8.1" r="1.25" fill="#0082ff"/></svg>
<div class="cb" style="left:114px;top:839.6px"></div>
<svg class="a" style="left:162px;top:840px" width="14" height="11" viewBox="0 0 14 11"><path d="M0 0.3 L6 0.3 L7 1 L8 0.3 L14 0.3 L14 10.7 L8 10.7 L7 11 L6 10.7 L0 10.7 Z" fill="#fa5f8b"/><path d="M2 4.5 H5.6 M2 6.5 H5.6 M8.4 4.5 H12 M8.4 6.5 H12" stroke="#ffd6e2" stroke-width="1"/></svg>
<div class="t" style="left:201.5px;top:839.2px;font-size:14px;font-weight:normal;color:#465366;letter-spacing:0.1px">29 Nov 2017 12:00 AM</div>
<div class="t" style="left:405px;top:838.7px;font-size:15px;font-weight:normal;color:#465366;letter-spacing:-0.19px">Industry news</div>
<div class="t" style="left:709.7px;top:838.7px;font-size:15px;font-weight:normal;color:#465366">Competitive intelligence</div>
<div class="t" style="left:913px;top:838.7px;font-size:15px;font-weight:normal;color:#465366">New</div>
<div class="a" style="left:1224px;top:847px;width:12.5px;height:1px;background:#4a505c"></div>
<div class="a" style="left:1427px;top:847px;width:12.5px;height:1px;background:#4a505c"></div>
<svg class="a" style="left:1837.8px;top:841.6px" width="3" height="10" viewBox="0 0 3 10"><circle cx="1.5" cy="1.3" r="1.25" fill="#0082ff"/><circle cx="1.5" cy="4.7" r="1.25" fill="#0082ff"/><circle cx="1.5" cy="8.1" r="1.25" fill="#0082ff"/></svg>
<div class="cb" style="left:114px;top:886.9px"></div>
<svg class="a" style="left:162px;top:887px" width="14" height="11" viewBox="0 0 14 11"><path d="M0 0.3 L6 0.3 L7 1 L8 0.3 L14 0.3 L14 10.7 L8 10.7 L7 11 L6 10.7 L0 10.7 Z" fill="#fa5f8b"/><path d="M2 4.5 H5.6 M2 6.5 H5.6 M8.4 4.5 H12 M8.4 6.5 H12" stroke="#ffd6e2" stroke-width="1"/></svg>
<div class="t" style="left:201.5px;top:886.5px;font-size:14px;font-weight:normal;color:#465366;letter-spacing:0.1px">29 Nov 2017 12:00 AM</div>
<div class="t" style="left:405px;top:886.0px;font-size:15px;font-weight:normal;color:#465366;letter-spacing:-0.16px">Expert blogs</div>
<div class="t" style="left:709.7px;top:886.0px;font-size:15px;font-weight:normal;color:#465366">Competitive intelligence</div>
<div class="t" style="left:913px;top:886.0px;font-size:15px;font-weight:normal;color:#465366">New</div>
<div class="a" style="left:1224px;top:894px;width:12.5px;height:1px;background:#4a505c"></div>
<div class="a" style="left:1427px;top:894px;width:12.5px;height:1px;background:#4a505c"></div>
<svg class="a" style="left:1837.8px;top:888.9px" width="3" height="10" viewBox="0 0 3 10"><circle cx="1.5" cy="1.3" r="1.25" fill="#0082ff"/><circle cx="1.5" cy="4.7" r="1.25" fill="#0082ff"/><circle cx="1.5" cy="8.1" r="1.25" fill="#0082ff"/></svg>
<div class="cb" style="left:114px;top:934.3px"></div>
<svg class="a" style="left:162px;top:934px" width="14" height="11" viewBox="0 0 14 11"><path d="M0 0.3 L6 0.3 L7 1 L8 0.3 L14 0.3 L14 10.7 L8 10.7 L7 11 L6 10.7 L0 10.7 Z" fill="#fa5f8b"/><path d="M2 4.5 H5.6 M2 6.5 H5.6 M8.4 4.5 H12 M8.4 6.5 H12" stroke="#ffd6e2" stroke-width="1"/></svg>
<div class="t" style="left:201.5px;top:933.9px;font-size:14px;font-weight:normal;color:#465366;letter-spacing:0.1px">29 Nov 2017 12:00 AM</div>
<div class="t" style="left:405px;top:933.4px;font-size:15px;font-weight:normal;color:#465366;letter-spacing:-0.24px">Competitors's social media</div>
<div class="t" style="left:709.7px;top:933.4px;font-size:15px;font-weight:normal;color:#465366">Competitive intelligence</div>
<div class="t" style="left:913px;top:933.4px;font-size:15px;font-weight:normal;color:#465366">New</div>
<div class="a" style="left:1224px;top:941px;width:12.5px;height:1px;background:#4a505c"></div>
<div class="a" style="left:1427px;top:941px;width:12.5px;height:1px;background:#4a505c"></div>
<svg class="a" style="left:1837.8px;top:936.3px" width="3" height="10" viewBox="0 0 3 10"><circle cx="1.5" cy="1.3" r="1.25" fill="#0082ff"/><circle cx="1.5" cy="4.7" r="1.25" fill="#0082ff"/><circle cx="1.5" cy="8.1" r="1.25" fill="#0082ff"/></svg>
<div class="cb" style="left:114px;top:982.0px"></div>
<svg class="a" style="left:162px;top:982px" width="14" height="11" viewBox="0 0 14 11"><path d="M0 0.3 L6 0.3 L7 1 L8 0.3 L14 0.3 L14 10.7 L8 10.7 L7 11 L6 10.7 L0 10.7 Z" fill="#fa5f8b"/><path d="M2 4.5 H5.6 M2 6.5 H5.6 M8.4 4.5 H12 M8.4 6.5 H12" stroke="#ffd6e2" stroke-width="1"/></svg>
<div class="t" style="left:201.5px;top:981.6px;font-size:14px;font-weight:normal;color:#465366;letter-spacing:0.1px">29 Nov 2017 12:00 AM</div>
<div class="t" style="left:405px;top:981.1px;font-size:15px;font-weight:normal;color:#465366;letter-spacing:0px">Competitors' web presentation</div>
<div class="t" style="left:709.7px;top:981.1px;font-size:15px;font-weight:normal;color:#465366">Competitive intelligence</div>
<div class="t" style="left:913px;top:981.1px;font-size:15px;font-weight:normal;color:#465366">New</div>
<div class="a" style="left:1224px;top:989px;width:12.5px;height:1px;background:#4a505c"></div>
<div class="a" style="left:1427px;top:989px;width:12.5px;height:1px;background:#4a505c"></div>
<svg class="a" style="left:1837.8px;top:984.0px" width="3" height="10" viewBox="0 0 3 10"><circle cx="1.5" cy="1.3" r="1.25" fill="#0082ff"/><circle cx="1.5" cy="4.7" r="1.25" fill="#0082ff"/><circle cx="1.5" cy="8.1" r="1.25" fill="#0082ff"/></svg>
<div class="t" style="left:1371px;top:1033px;font-size:15.3px;color:#4a566b">1-10 of 773 items</div>
<svg class="a" style="left:1505px;top:1036px" width="9" height="11" viewBox="0 0 9 11"><path d="M7.5 0.8 L1.5 5.5 L7.5 10.2" fill="none" stroke="#7d889a" stroke-width="1.3"/></svg>
<div class="a" style="left:1523px;top:1029px;width:24px;height:25px;border:1.6px solid #1a8bff;border-radius:4px;color:#0082ff;font-size:15.3px;line-height:21px;text-align:center">1</div>
<div class="t" style="left:1554.4px;top:1033px;font-size:15.3px;color:#4a566b">2</div>
<div class="t" style="left:1578.8px;top:1033px;font-size:15.3px;color:#4a566b">3</div>
<div class="t" style="left:1604px;top:1033px;font-size:15.3px;color:#4a566b">4</div>
<div class="t" style="left:1628.4px;top:1033px;font-size:15.3px;color:#4a566b">5</div>
<div class="t" style="left:1684.7px;top:1033px;font-size:15.3px;color:#4a566b">78</div>
<div class="a" style="left:1651.0px;top:1039.5px;width:3.2px;height:3.2px;border-radius:50%;background:#4a566b"></div>
<div class="a" style="left:1659.0px;top:1039.5px;width:3.2px;height:3.2px;border-radius:50%;background:#4a566b"></div>
<div class="a" style="left:1667.0px;top:1039.5px;width:3.2px;height:3.2px;border-radius:50%;background:#4a566b"></div>
<svg class="a" style="left:1717px;top:1036px" width="9" height="11" viewBox="0 0 9 11"><path d="M1.5 0.8 L7.5 5.5 L1.5 10.2" fill="none" stroke="#4a566b" stroke-width="1.3"/></svg>
<div class="a" style="left:1736px;top:1029.5px;width:96px;height:24px;border:1px solid #e3e7ee;border-radius:2px;background:#fff"></div>
<div class="t" style="left:1745px;top:1033px;font-size:15.3px;color:#4a566b">10 / page</div>
<svg class="a" style="left:1813px;top:1037px" width="10" height="8" viewBox="0 0 10 8"><path d="M0.5 0.5 L5 7 L9.5 0.5" fill="none" stroke="#4d5a70" stroke-width="1.1"/></svg>
</body></html>
